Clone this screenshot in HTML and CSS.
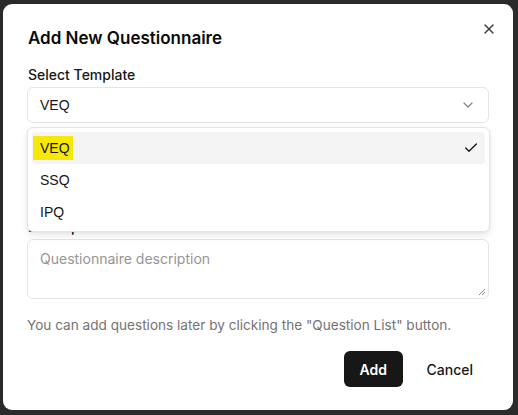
FILE: index.html
```html
<!DOCTYPE html>
<html>
<head>
<meta charset="utf-8">
<link rel="stylesheet" href="styles.css">
</head>
<body>
<div class="modal">
  <button class="close" aria-label="Close">
    <svg width="16" height="16" viewBox="0 0 24 24" fill="none" stroke="currentColor" stroke-width="2" stroke-linecap="round"><path d="M18 6 6 18"/><path d="M6 6l12 12"/></svg>
  </button>
  <h2 class="title">Add New Questionnaire</h2>
  <div class="field">
    <label class="label">Select Template</label>
    <div class="select">
      <span class="value">VEQ</span>
      <svg class="chev" width="16" height="16" viewBox="0 0 24 24" fill="none" stroke="currentColor" stroke-width="2" stroke-linecap="round" stroke-linejoin="round"><path d="m6 9 6 6 6-6"/></svg>
    </div>
  </div>
  <div class="field hidden-field">
    <label class="label">Questionnaire Name</label>
    <div class="input"></div>
  </div>
  <div class="field desc-field">
    <label class="label">Description</label>
    <div class="textarea">
      <span class="placeholder">Questionnaire description</span>
      <svg class="grip" width="8" height="8" viewBox="0 0 8 8" stroke="#8a8a8a" stroke-width="1"><path d="M7 1 1 7M7 4 4 7"/></svg>
    </div>
  </div>
  <p class="help">You can add questions later by clicking the "Question List" button.</p>
  <div class="actions">
    <button class="btn primary">Add</button>
    <button class="btn ghost">Cancel</button>
  </div>
  <div class="menu">
    <div class="item active">
      <span class="mark">VEQ</span>
      <svg class="check" width="16" height="16" viewBox="0 0 24 24" fill="none" stroke="currentColor" stroke-width="2" stroke-linecap="round" stroke-linejoin="round"><path d="M20 6 9 17l-5-5"/></svg>
    </div>
    <div class="item">SSQ</div>
    <div class="item">IPQ</div>
  </div>
</div>
</body>
</html>
```
FILE: styles.css
```css
* { box-sizing: border-box; }
html, body { margin: 0; padding: 0; }
body {
  background: #2b2b2b;
  width: 518px;
  height: 415px;
  overflow: hidden;
  font-family: Inter, "Liberation Sans", sans-serif;
}
.modal {
  position: relative;
  margin: 4px 0 0 3px;
  width: 510px;
  height: 406px;
  background: #fff;
  border-radius: 9px;
  padding: 20px 24px 0 24px;
  display: flex;
  flex-direction: column;
}
.close {
  position: absolute;
  top: 17px;
  right: 16px;
  width: 16px;
  height: 16px;
  padding: 0;
  border: 0;
  background: none;
  color: #3a3a3a;
  display: flex;
}
.title {
  margin: 0 0 0 1px;
  font-size: 17px;
  line-height: 28px;
  font-weight: 600;
  color: #0a0a0a;
}
.field {
  display: flex;
  flex-direction: column;
  gap: 2px;
}
.field:first-of-type { margin-top: 13px; }
.label {
  font-size: 14px;
  line-height: 20px;
  font-weight: 500;
  color: #171717;
  padding-left: 1px;
}
.select {
  height: 36px;
  border: 1px solid #e5e5e5;
  border-radius: 6px;
  display: flex;
  align-items: center;
  justify-content: space-between;
  padding: 0 12px 0 12px;
}
.value {
  font-family: "Liberation Sans", Arial, sans-serif;
  font-size: 14px;
  color: #171717;
}
.chev { color: #8a8a8a; }
.hidden-field { margin-top: 16px; }
.input { height: 36px; border: 1px solid #e5e5e5; border-radius: 6px; }
.desc-field { margin-top: 20px; }
.textarea {
  position: relative;
  height: 60px;
  border: 1px solid #e5e5e5;
  border-radius: 6px;
  padding: 8px 12px;
}
.placeholder {
  font-size: 14px;
  line-height: 20px;
  color: #959595;
}
.grip { position: absolute; right: 2px; bottom: 2px; }
.help {
  margin: 16px 0 0 0;
  font-size: 13.6px;
  line-height: 20px;
  color: #737373;
}
.actions {
  margin-top: 16px;
  display: flex;
  justify-content: flex-end;
  gap: 8px;
}
.btn {
  height: 36px;
  border: 0;
  border-radius: 6px;
  font-family: Inter, "Liberation Sans", sans-serif;
  font-size: 14px;
  font-weight: 500;
  padding: 0 16px;
}
.primary { background: #171717; color: #fff; width: 59px; font-weight: 600; }
.ghost { background: transparent; color: #171717; }
.menu {
  position: absolute;
  top: 123px;
  left: 24px;
  width: 463px;
  height: 105px;
  background: #fff;
  border: 1px solid #e5e5e5;
  border-radius: 6px;
  box-shadow: 0 4px 8px rgba(0,0,0,0.08), 0 1px 3px rgba(0,0,0,0.06);
  padding: 4px;
}
.item {
  height: 32px;
  display: flex;
  align-items: center;
  justify-content: space-between;
  padding: 0 8px;
  border-radius: 4px;
  font-family: "Liberation Sans", Arial, sans-serif;
  font-size: 14px;
  color: #171717;
}
.item.active { background: #f4f4f4; }
.mark {
  background: #f5e80a;
  line-height: 24px;
  padding: 0 3px 0 7px;
  margin-left: -7px;
}
.check { color: #171717; margin-right: -2px; }
```
